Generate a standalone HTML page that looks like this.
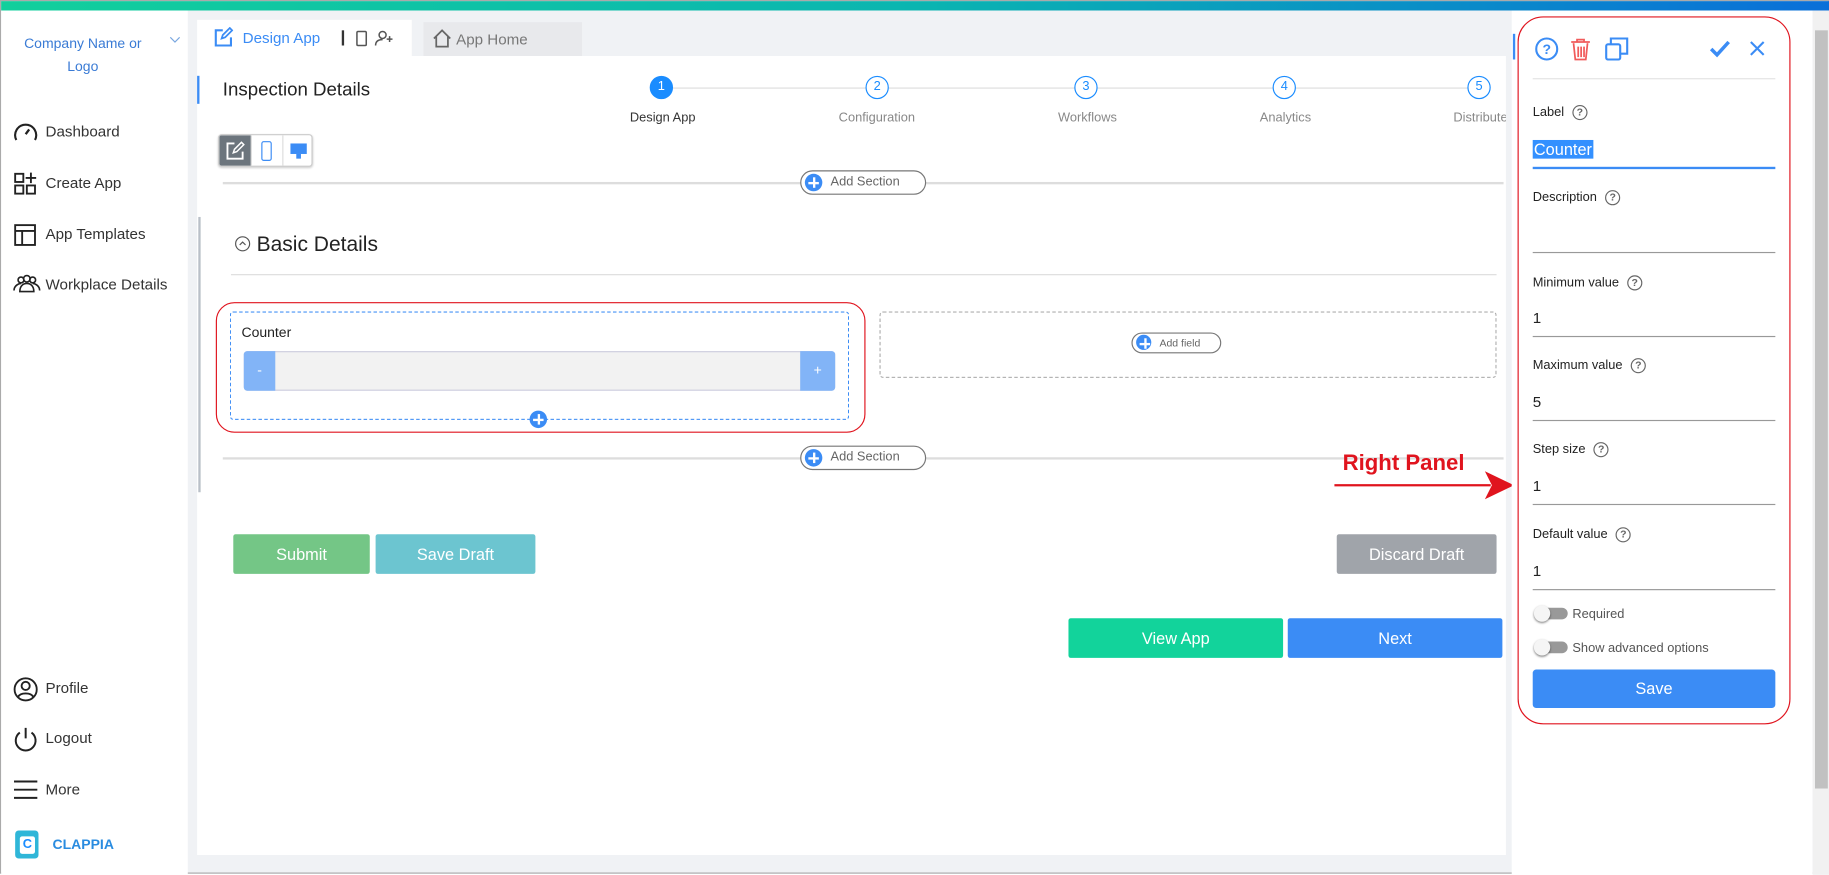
<!DOCTYPE html>
<html><head><meta charset="utf-8"><style>
*{box-sizing:border-box;margin:0;padding:0}
html,body{width:1829px;height:874px;overflow:hidden;background:#fff;font-family:"Liberation Sans",Arial,sans-serif}
#w{position:absolute;left:0;top:0;width:1568px;height:749px;transform:scale(1.16645);transform-origin:0 0;background:#f0f2f5;border:1px solid #aaa}
.a{position:absolute}
.t{position:absolute;white-space:nowrap}
.mi{position:absolute;left:10px;font-size:13px;color:#333;white-space:nowrap;width:150px}
.mi svg{position:absolute;left:0;top:-2px}
.mi span{position:absolute;left:28px;top:0;white-space:nowrap}
.circ{position:absolute;width:20px;height:20px;border-radius:50%;border:1.5px solid #1a8cff;background:#fff;color:#1a8cff;font-size:11px;text-align:center;line-height:17px}
.sl{position:absolute;font-size:11px;color:#888;top:94px;white-space:nowrap}
.pill{position:absolute;height:21px;border:1px solid #777;border-radius:11px;background:#fff;font-size:11px;color:#666;white-space:nowrap}
.pill i{position:absolute;left:3px;top:2px;width:15px;height:15px;border-radius:50%;background:#3b8cf5}
.pill i:before{content:"";position:absolute;left:3px;top:6.5px;width:9px;height:2px;background:#fff}
.pill i:after{content:"";position:absolute;left:6.5px;top:3px;width:2px;height:9px;background:#fff}
.btn{position:absolute;color:#fff;font-size:14px;text-align:center;border-radius:2px}
.lbl{position:absolute;left:1313px;font-size:11px;color:#222;white-space:nowrap}
.q{display:inline-block;width:13px;height:13px;border:1.3px solid #666;border-radius:50%;font-size:9px;text-align:center;line-height:11px;color:#666;margin-left:7px;vertical-align:middle;font-weight:bold}
.val{position:absolute;left:1313px;font-size:13px;color:#222}
.ln{position:absolute;left:1313px;width:208px;height:1px;background:#999}
.tg{position:absolute;left:1316px;width:27px;height:10px;border-radius:5px;background:#999}
.tg:after{content:"";position:absolute;left:-2px;top:-2px;width:14px;height:14px;border-radius:50%;background:#f5f5f5;box-shadow:0 1px 2px rgba(0,0,0,.5)}
</style></head><body><div id="w">
<div class="a" style="left:0;top:0;width:1568px;height:8px;background:linear-gradient(90deg,#12cf9c,#0bb5b0 50%,#0a6fd9)"></div>
<div class="a" style="left:0;top:8px;width:160px;height:741px;background:#fff"></div>
<div class="t" style="left:0;width:140px;text-align:center;top:26px;font-size:12px;color:#3a7bd5;line-height:20px;white-space:normal">Company Name or<br>Logo</div>
<svg class="a" style="left:144px;top:29px" width="10" height="8"><path d="M1 2l4 4 4-4" stroke="#7aa7e0" fill="none"/></svg>
<div class="mi" style="top:104px"><svg width="22" height="20" viewBox="0 0 22 20"><path d="M3 17A9 9 0 1 1 19 17" stroke="#222" stroke-width="1.8" fill="none"/><path d="M11 12l3-4" stroke="#222" stroke-width="2"/></svg><span>Dashboard</span></div>
<div class="mi" style="top:148px"><svg width="22" height="22" viewBox="0 0 22 22"><rect x="2" y="2" width="7" height="7" stroke="#222" stroke-width="1.6" fill="none"/><rect x="2" y="12" width="7" height="7" stroke="#222" stroke-width="1.6" fill="none"/><rect x="12" y="12" width="7" height="7" stroke="#222" stroke-width="1.6" fill="none"/><path d="M15.5 1v9M11 5.5h9" stroke="#222" stroke-width="1.6"/></svg><span>Create App</span></div>
<div class="mi" style="top:192px"><svg width="22" height="22" viewBox="0 0 22 22"><rect x="2" y="2" width="17" height="17" stroke="#222" stroke-width="1.6" fill="none"/><path d="M2 7h17M8 7v12" stroke="#222" stroke-width="1.6"/></svg><span>App Templates</span></div>
<div class="mi" style="top:235px"><svg width="24" height="20" viewBox="0 0 24 20"><circle cx="7" cy="6" r="2.5" stroke="#222" fill="none" stroke-width="1.4"/><circle cx="12" cy="5" r="2.8" stroke="#222" fill="none" stroke-width="1.4"/><circle cx="17" cy="6" r="2.5" stroke="#222" fill="none" stroke-width="1.4"/><path d="M1 15c0-4 4-6 6-6M23 15c0-4-4-6-6-6M6 16c0-5 3-7 6-7s6 2 6 7z" stroke="#222" fill="none" stroke-width="1.4"/></svg><span>Workplace Details</span></div>
<div class="mi" style="top:581px"><svg width="22" height="22" viewBox="0 0 22 22"><circle cx="11" cy="11" r="9.5" stroke="#222" stroke-width="1.6" fill="none"/><circle cx="11" cy="8" r="3.5" stroke="#222" stroke-width="1.6" fill="none"/><path d="M4.5 17.5c2-4 11-4 13 0" stroke="#222" stroke-width="1.6" fill="none"/></svg><span>Profile</span></div>
<div class="mi" style="top:624px"><svg width="22" height="22" viewBox="0 0 22 22"><path d="M6 5A8.5 8.5 0 1 0 16 5" stroke="#222" stroke-width="1.7" fill="none"/><path d="M11 1v9" stroke="#222" stroke-width="1.7"/></svg><span>Logout</span></div>
<div class="mi" style="top:668px"><svg width="22" height="20" viewBox="0 0 22 20"><path d="M1 3h20M1 10h20M1 17h20" stroke="#222" stroke-width="1.7"/></svg><span>More</span></div>
<div class="a" style="left:12px;top:711px;width:20px;height:24px;background:#2fb6d8;border-radius:3px"></div>
<div class="a" style="left:16px;top:716px;width:13px;height:15px;background:#fff;border-radius:2px;color:#1a8cff;font-size:11px;font-weight:bold;text-align:center;line-height:15px">C</div>
<div class="t" style="left:44px;top:716px;font-size:12px;font-weight:bold;color:#2a8ce0">CLAPPIA</div>
<div class="a" style="left:168px;top:16px;width:184px;height:31px;background:#fff"></div>
<svg class="a" style="left:181px;top:22px" width="18" height="18" viewBox="0 0 18 18"><path d="M9 3H3v13h13V9" stroke="#3b8cf5" stroke-width="1.8" fill="none"/><path d="M8 10l1-3 6-6 2 2-6 6z" stroke="#3b8cf5" stroke-width="1.5" fill="none"/></svg>
<div class="t" style="left:207px;top:24px;font-size:13px;color:#3b8cf5">Design App</div>
<div class="a" style="left:292px;top:25px;width:1.5px;height:13px;background:#333"></div>
<svg class="a" style="left:303px;top:24px" width="36" height="16" viewBox="0 0 36 16"><rect x="2" y="2" width="8" height="12" rx="1" stroke="#555" stroke-width="1.3" fill="none"/><circle cx="24" cy="5" r="3" stroke="#555" fill="none" stroke-width="1.3"/><path d="M18 14c0-4 3-5 6-5M30 6v5M27.5 8.5h5" stroke="#555" fill="none" stroke-width="1.3"/></svg>
<div class="a" style="left:362px;top:18px;width:136px;height:29px;background:#e8e9ec"></div>
<svg class="a" style="left:369px;top:23px" width="18" height="18" viewBox="0 0 18 18"><path d="M2 9L9 2l7 7M4 7v9h10V7" stroke="#666" stroke-width="1.5" fill="none"/></svg>
<div class="t" style="left:390px;top:25px;font-size:13px;color:#777">App Home</div>
<div class="a" style="left:168px;top:47px;width:1122px;height:685px;background:#fff"></div>
<div class="a" style="left:168px;top:64px;width:2px;height:24px;background:#3b8cf5"></div>
<div class="t" style="left:190px;top:68px;font-size:16px;color:#222">Inspection Details</div>
<div class="a" style="left:576px;top:74px;width:690px;height:1px;background:#ddd"></div>
<div class="circ" style="left:556px;top:64px;background:#1a8cff;color:#fff">1</div>
<div class="circ" style="left:741px;top:64px">2</div>
<div class="circ" style="left:920px;top:64px">3</div>
<div class="circ" style="left:1090px;top:64px">4</div>
<div class="circ" style="left:1257px;top:64px">5</div>
<div class="sl" style="left:539px;color:#333">Design App</div>
<div class="sl" style="left:718px">Configuration</div>
<div class="sl" style="left:906px">Workflows</div>
<div class="sl" style="left:1079px">Analytics</div>
<div class="sl" style="left:1245px;width:45px;overflow:hidden">Distribute</div>
<div class="a" style="left:186px;top:114px;width:81px;height:28px;border:1px solid #ccc;border-radius:3px;background:#fff;box-shadow:0 1px 2px rgba(0,0,0,.2);overflow:hidden">
<div class="a" style="left:0;top:0;width:27px;height:27px;background:#6c757d"></div>
<svg class="a" style="left:5px;top:5px" width="17" height="17" viewBox="0 0 17 17"><path d="M8 2H2v13h13V9" stroke="#fff" stroke-width="1.6" fill="none"/><path d="M7 10l1-3 6-6 2 2-6 6z" stroke="#fff" stroke-width="1.3" fill="none"/></svg>
<div class="a" style="left:27px;top:0;width:1px;height:28px;background:#ddd"></div>
<div class="a" style="left:36px;top:5px;width:9px;height:17px;border:1.5px solid #3b8cf5;border-radius:2px"></div>
<div class="a" style="left:54px;top:0;width:1px;height:28px;background:#ddd"></div>
<div class="a" style="left:61px;top:7px;width:14px;height:9px;background:#3b8cf5"></div>
<div class="a" style="left:66px;top:16px;width:4px;height:4px;background:#3b8cf5"></div>
</div>
<div class="a" style="left:190px;top:155px;width:1098px;height:1.5px;background:#ddd"></div>
<div class="pill" style="left:685px;top:145px;width:108px"><i></i><span style="position:absolute;left:25px;top:3px">Add Section</span></div>
<div class="a" style="left:169px;top:185px;width:2px;height:236px;background:#b9c0c8"></div>
<svg class="a" style="left:200px;top:201px" width="14" height="14"><circle cx="7" cy="7" r="6" stroke="#555" fill="none"/><path d="M4.5 8l2.5-2.5L9.5 8" stroke="#555" fill="none"/></svg>
<div class="t" style="left:219px;top:198px;font-size:18px;color:#222">Basic Details</div>
<div class="a" style="left:197px;top:234px;width:1085px;height:1px;background:#ddd"></div>
<div class="a" style="left:184px;top:258px;width:557px;height:112px;border:1.5px solid #e0141e;border-radius:16px"></div>
<div class="a" style="left:196px;top:266px;width:531px;height:93px;border:1px dashed #3b8cf5;border-radius:3px"></div>
<div class="t" style="left:206px;top:277px;font-size:12px;color:#222">Counter</div>
<div class="a" style="left:208px;top:300px;width:507px;height:34px;background:#f2f2f2;border:1px solid #ccd;border-radius:3px"></div>
<div class="a" style="left:208px;top:300px;width:27px;height:34px;background:#82b4f7;color:#fff;font-size:12px;text-align:center;line-height:32px;border-radius:3px 0 0 3px">-</div>
<div class="a" style="left:685px;top:300px;width:30px;height:34px;background:#82b4f7;color:#fff;font-size:12px;text-align:center;line-height:32px;border-radius:0 3px 3px 0">+</div>
<div class="pill" style="left:453px;top:351px;width:16px;height:16px;border:none;background:transparent"><i style="left:0;top:0"></i></div>
<div class="a" style="left:753px;top:266px;width:529px;height:57px;border:1px dashed #aaa;border-radius:3px"></div>
<div class="pill" style="left:969px;top:284px;width:77px;height:18px;font-size:9px"><i style="top:1px;width:13px;height:13px"></i><span style="position:absolute;left:23px;top:3px">Add field</span></div>
<div class="a" style="left:190px;top:391px;width:1098px;height:1.5px;background:#ddd"></div>
<div class="pill" style="left:685px;top:381px;width:108px"><i></i><span style="position:absolute;left:25px;top:3px">Add Section</span></div>
<div class="btn" style="left:199px;top:457px;width:117px;height:34px;line-height:34px;background:#74c686">Submit</div>
<div class="btn" style="left:321px;top:457px;width:137px;height:34px;line-height:34px;background:#6cc5d0">Save Draft</div>
<div class="btn" style="left:1145px;top:457px;width:137px;height:34px;line-height:34px;background:#a0a4aa">Discard Draft</div>
<div class="btn" style="left:915px;top:529px;width:184px;height:34px;line-height:34px;background:#12d39b">View App</div>
<div class="btn" style="left:1103px;top:529px;width:184px;height:34px;line-height:34px;background:#3b8cf5">Next</div>
<div class="t" style="left:1150px;top:386px;font-size:19px;font-weight:bold;color:#e0141e">Right Panel</div>
<svg class="a" style="left:1142px;top:400px" width="156" height="30"><path d="M1 15H135" stroke="#e0141e" stroke-width="2"/><path d="M130 3l25 12-25 12 6-12z" fill="#e0141e"/></svg>
<div class="a" style="left:1295px;top:8px;width:258px;height:741px;background:#fff"></div>
<div class="a" style="left:1296px;top:28px;width:2px;height:22px;background:#3b8cf5"></div>
<div class="a" style="left:1553px;top:8px;width:15px;height:741px;background:#f1f1f1"></div>
<div class="a" style="left:1555px;top:25px;width:11px;height:650px;background:#c1c1c1"></div>
<div class="a" style="left:1300px;top:13px;width:234px;height:607px;border:1.5px solid #e0141e;border-radius:22px"></div>
<svg class="a" style="left:1315px;top:30px" width="200" height="22" viewBox="0 0 200 22"><circle cx="10" cy="11" r="9" stroke="#3b8cf5" stroke-width="1.8" fill="none"/><text x="10" y="15.5" font-size="12" font-weight="bold" fill="#3b8cf5" text-anchor="middle" font-family="Liberation Sans">?</text><path d="M31 5h16M36 5V3h6v2M33 6l1.5 14h9L45 6M37 9v9M39.5 9v9M42 9v9" stroke="#f15b5b" stroke-width="1.5" fill="none"/><rect x="61" y="7" width="12" height="13" rx="1.5" stroke="#3b8cf5" stroke-width="1.8" fill="none"/><path d="M65 7V2h14v13h-6" stroke="#3b8cf5" stroke-width="1.8" fill="none"/><path d="M151 11l5 5 10-11" stroke="#3b8cf5" stroke-width="3" fill="none"/><path d="M185 5l11 11M196 5l-11 11" stroke="#3b8cf5" stroke-width="1.8"/></svg>
<div class="a" style="left:1313px;top:66px;width:208px;height:1px;background:#e3e3e3"></div>
<div class="lbl" style="top:89px">Label<span class="q">?</span></div>
<div class="t" style="left:1313px;top:119px;font-size:14px;color:#fff;background:#3390ff;padding:0 1px">Counter</div>
<div class="a" style="left:1313px;top:142px;width:208px;height:2px;background:#3b8cf5"></div>
<div class="lbl" style="top:162px">Description<span class="q">?</span></div>
<div class="ln" style="top:215px"></div>
<div class="lbl" style="top:235px">Minimum value<span class="q">?</span></div>
<div class="val" style="top:264px">1</div><div class="ln" style="top:287px"></div>
<div class="lbl" style="top:306px">Maximum value<span class="q">?</span></div>
<div class="val" style="top:336px">5</div><div class="ln" style="top:359px"></div>
<div class="lbl" style="top:378px">Step size<span class="q">?</span></div>
<div class="val" style="top:408px">1</div><div class="ln" style="top:431px"></div>
<div class="lbl" style="top:451px">Default value<span class="q">?</span></div>
<div class="val" style="top:481px">1</div><div class="ln" style="top:504px"></div>
<div class="tg" style="top:520px"></div><div class="t" style="left:1347px;top:520px;font-size:11px;color:#555">Required</div>
<div class="tg" style="top:549px"></div><div class="t" style="left:1347px;top:549px;font-size:11px;color:#555">Show advanced options</div>
<div class="btn" style="left:1313px;top:573px;width:208px;height:33px;line-height:33px;background:#3b8cf5;border-radius:3px">Save</div>
</div></body></html>
